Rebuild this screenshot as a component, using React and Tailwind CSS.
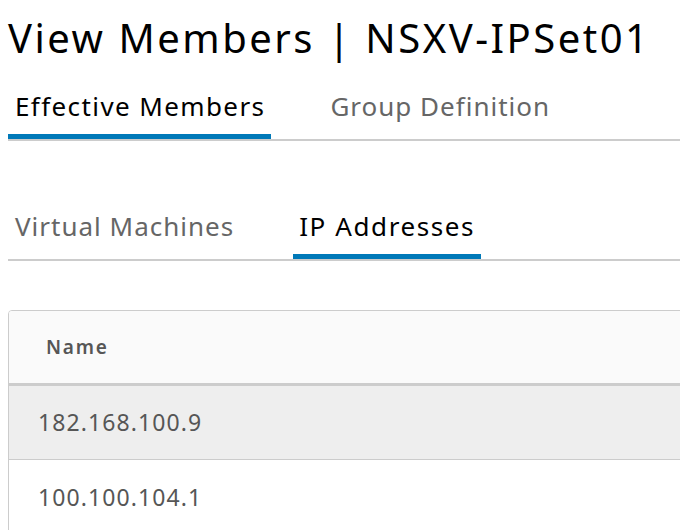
export default function App() {
  return (
    <div className="w-[680px] h-[530px] overflow-hidden bg-white font-['Noto_Sans',sans-serif]">
      <div className="pl-[8px]">
        <h1 className="pt-[10px] text-[40px] leading-[56px] tracking-[2.5px] text-black font-normal whitespace-nowrap">View Members | NSXV-IPSet01</h1>
        <div className="mt-[22px] flex border-b-2 border-[#cccccc] w-[700px]">
          <div className="pl-[7px] pr-[6px] pb-[10px] border-b-[5px] border-[#0079b8] text-[26px] leading-[36px] tracking-[1.4px] text-black whitespace-nowrap">Effective Members</div>
          <div className="ml-[52px] pl-[7px] pb-[10px] text-[26px] leading-[36px] tracking-[1px] text-[#666666] whitespace-nowrap">Group Definition</div>
        </div>
        <div className="mt-[67px] flex border-b-2 border-[#cccccc] w-[700px]">
          <div className="pl-[7px] pr-[6px] pb-[10px] text-[26px] leading-[36px] tracking-[1px] text-[#666666] whitespace-nowrap">Virtual Machines</div>
          <div className="ml-[53px] px-[6px] pb-[10px] border-b-[5px] border-[#0079b8] text-[26px] leading-[36px] tracking-[1.6px] text-black whitespace-nowrap">IP Addresses</div>
        </div>
        <div className="mt-[49px] w-[700px] border border-[#cccccc] rounded-[4px] overflow-hidden">
          <div className="h-[75px] bg-[#fafafa] flex items-center pl-[37px] text-[19px] tracking-[1.8px] font-semibold text-[#565656] border-b-[3px] border-[#cccccc]">Name</div>
          <div className="h-[74px] bg-[#eeeeee] flex items-center pl-[29px] text-[23px] tracking-[1.1px] text-[#565656] border-b border-[#cccccc]">182.168.100.9</div>
          <div className="h-[74px] bg-white flex items-center pl-[29px] text-[23px] tracking-[1.1px] text-[#565656]">100.100.104.1</div>
        </div>
      </div>
    </div>
  );
}
